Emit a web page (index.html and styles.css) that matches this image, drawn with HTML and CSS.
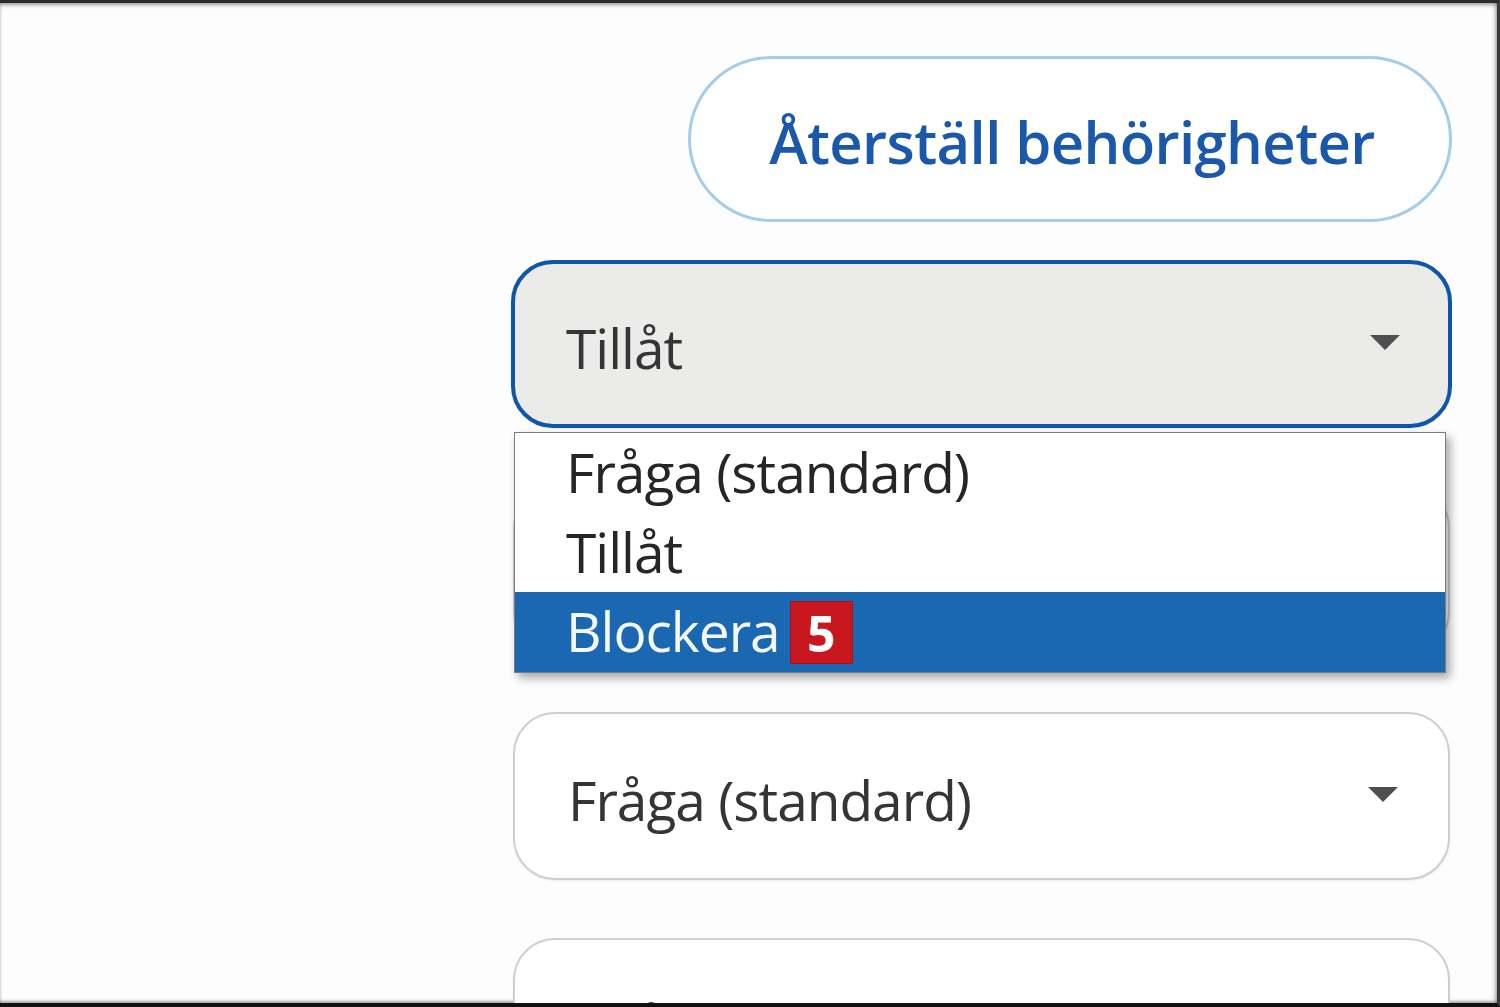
FILE: index.html
```html
<!DOCTYPE html>
<html lang="sv">
<head>
<meta charset="utf-8">
<title>Behörigheter</title>
<link rel="stylesheet" href="styles.css">
</head>
<body>
<div class="frame">
  <div class="panel">
    <button class="reset-btn">Återställ behörigheter</button>
    <div class="select-wrap">
      <div class="select select-open">
        <span class="select-value">Tillåt</span>
        <span class="caret"></span>
      </div>
      <ul class="popup">
        <li class="opt">Fråga (standard)</li>
        <li class="opt">Tillåt</li>
        <li class="opt opt-active">Blockera <span class="badge">5</span></li>
      </ul>
    </div>
    <div class="select select-covered">
      <span class="caret"></span>
    </div>
    <div class="select">
      <span class="select-value">Fråga (standard)</span>
      <span class="caret"></span>
    </div>
    <div class="select">
      <span class="select-value">Tillåt</span>
      <span class="caret"></span>
    </div>
  </div>
</div>
</body>
</html>
```
FILE: styles.css
```css
* { box-sizing: border-box; }
html, body { margin: 0; padding: 0; background: #fff; }
body { font-family: "Open Sans", "Noto Sans", sans-serif; }

.frame {
  width: 1500px;
  height: 1007px;
  overflow: hidden;
  background: #fdfdfd;
  border-top: 3px solid #2a2a2a;
  border-right: 3px solid #3a3a3a;
  border-bottom: 4px solid #111;
  box-shadow: inset 0 3px 4px -1px rgba(0,0,0,0.35), inset -3px 0 4px -1px rgba(0,0,0,0.25), inset 0 -3px 3px -1px rgba(0,0,0,0.3);
}

.panel {
  display: flex;
  flex-direction: column;
  align-items: flex-end;
  padding: 53px 45px 0 0;
  gap: 58px;
}

.reset-btn {
  width: 764px;
  height: 166px;
  border: 3px solid #a4ccec;
  border-radius: 83px;
  background: #fff;
  color: #1a58ac;
  font-family: "Open Sans", "Noto Sans", sans-serif;
  font-weight: 600;
  font-size: 58px;
  letter-spacing: -0.6px;
  padding: 4px 0 0 4px;
  margin-bottom: -20px;
}

.select-wrap {
  position: relative;
  width: 941px;
}

.select {
  width: 937px;
  height: 168px;
  margin-right: 2px;
  border: 2px solid #cfcfcf;
  border-radius: 42px;
  background: #fff;
  display: flex;
  align-items: center;
  justify-content: space-between;
  padding: 0 50px 0 53px;
  box-shadow: 0 1px 2px rgba(0,0,0,0.08);
}

.select-covered {
  justify-content: flex-end;
}

.select-open {
  width: 941px;
  margin-right: 0;
  border: 4px solid #0f56aa;
  background: #ebebea;
  padding: 0 48px 0 51px;
}

.select-value {
  color: #353535;
  font-size: 55px;
  letter-spacing: -1px;
  padding-top: 6px;
}

.caret {
  width: 0;
  height: 0;
  border-left: 15px solid transparent;
  border-right: 15px solid transparent;
  border-top: 15px solid #4f4f4f;
  margin-bottom: 4px;
}

.popup {
  position: absolute;
  left: 3px;
  top: 172px;
  width: 932px;
  margin: 0;
  padding: 0;
  list-style: none;
  background: #fff;
  border: 1px solid #7c7c7c;
  box-shadow: 4px 5px 9px rgba(0,0,0,0.35);
  z-index: 5;
}

.opt {
  height: 79.5px;
  display: flex;
  align-items: center;
  padding-left: 51px;
  color: #262626;
  font-size: 55px;
  letter-spacing: -1px;
  padding-bottom: 2px;
}

.opt-active {
  background: #1a67b2;
  color: #f4f8fc;
}

.badge {
  display: inline-flex;
  align-items: center;
  justify-content: center;
  width: 63px;
  height: 63px;
  margin-left: 10px;
  margin-top: 4px;
  background: #c8171e;
  border: 1px solid #a51218;
  color: #fff;
  font-weight: 700;
  font-size: 50px;
  letter-spacing: 0;
  line-height: 1;
}
```
